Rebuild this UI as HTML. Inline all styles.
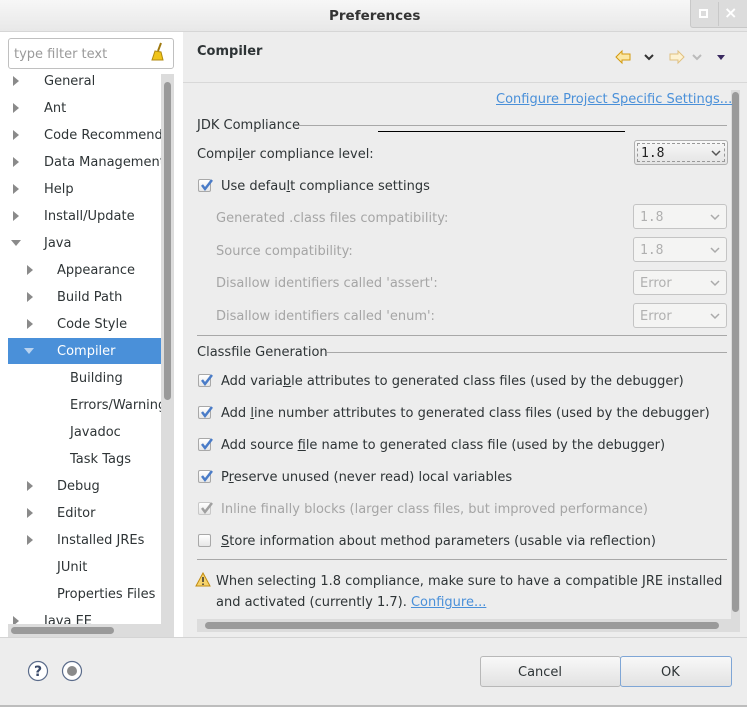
<!DOCTYPE html>
<html><head><meta charset="utf-8"><style>
*{margin:0;padding:0;box-sizing:border-box}
body{width:747px;height:707px;overflow:hidden;background:#ededed;font-family:"DejaVu Sans","Liberation Sans",sans-serif;font-size:13px;color:#2e3436;position:relative;line-height:19px}
.a{position:absolute;white-space:nowrap}
.t{line-height:19px}
.tri{position:absolute;width:0;height:0;border-top:5px solid transparent;border-bottom:5px solid transparent;border-left:6px solid #8a8a8a}
.trd{position:absolute;width:0;height:0;border-left:5px solid transparent;border-right:5px solid transparent;border-top:6px solid #8a8a8a}
.cb{position:absolute;width:13px;height:13px;border:1px solid #a8a8a8;background:linear-gradient(#fff,#e6e6e6);border-radius:2px}
.cb svg{position:absolute;left:0;top:-2px}
.combo{position:absolute;width:94px;height:25px;border:1px solid #c4c4c4;border-radius:3px;background:#f4f4f3;font-family:"DejaVu Sans Mono","Liberation Mono",monospace;color:#b0b0b0;padding:5px 0 0 6px;line-height:15px}
.combo svg{position:absolute;right:6px;top:9px}
.dis{color:#a5a5a5}
u{text-decoration:underline}
</style></head><body>
<div class="a" style="left:0;top:0;width:747px;height:32px;background:linear-gradient(#f7f7f7,#e8e8e8);border-bottom:1px solid #d6d6d6"></div>
<div class="a" style="left:329px;top:7px;font-weight:bold;font-size:13.5px;color:#333">Preferences</div>
<div class="a" style="left:690px;top:0;width:57px;height:28px;background:#dcdcdc;border-left:1px solid #c8c8c8;border-bottom:1px solid #c8c8c8;border-radius:0 0 0 3px"></div>
<div class="a" style="left:718px;top:2px;width:1px;height:24px;background:#c8c8c8"></div>
<div class="a" style="left:699px;top:9px;width:9px;height:9px;border:2px solid #fff"></div>
<div class="a" style="left:724px;top:3px;color:#fff;font-size:16px;font-weight:bold">×</div>

<div class="a" style="left:0;top:32px;width:182px;height:606px;background:#fff"></div>
<div class="a" style="left:8px;top:38px;width:166px;height:31px;border:1px solid #c0c0c0;border-radius:3px;background:#fff"></div>
<div class="a" style="left:14px;top:45px;color:#9a9a9a">type filter text</div>
<svg class="a" style="left:150px;top:42px" width="16" height="20"><path d="M11 1 L8 9" stroke="#a07a10" stroke-width="2"/><path d="M5 9 L11 10 L13 18 L2 18 Z" fill="#f0c419" stroke="#b08a10"/></svg>
<div class="a" style="left:8px;top:74px;width:153px;height:550px;overflow:hidden;background:#fff">
<div class="a" style="left:0;top:264px;width:153px;height:26px;background:#4a90d9"></div>
</div>
<div class="a" style="left:161px;top:74px;width:13px;height:550px;background:#dcdcdc"></div>
<div class="a" style="left:164px;top:82px;width:7px;height:318px;background:#9a9a9a;border-radius:4px"></div>
<div class="a" style="left:8px;top:624px;width:166px;height:13px;background:#dcdcdc"></div>
<div class="a" style="left:11px;top:627px;width:103px;height:7px;background:#9a9a9a;border-radius:4px"></div>
<div class="a" style="left:0;top:74px;width:161px;height:550px;overflow:hidden">
<div class="tri" style="left:13px;top:2px"></div><div class="a t" style="left:44px;top:-2px">General</div>
<div class="tri" style="left:13px;top:29px"></div><div class="a t" style="left:44px;top:25px">Ant</div>
<div class="tri" style="left:13px;top:56px"></div><div class="a t" style="left:44px;top:52px">Code Recommend</div>
<div class="tri" style="left:13px;top:83px"></div><div class="a t" style="left:44px;top:79px">Data Management</div>
<div class="tri" style="left:13px;top:110px"></div><div class="a t" style="left:44px;top:106px">Help</div>
<div class="tri" style="left:13px;top:137px"></div><div class="a t" style="left:44px;top:133px">Install/Update</div>
<div class="trd" style="left:11px;top:166px"></div><div class="a t" style="left:44px;top:160px">Java</div>
<div class="tri" style="left:27px;top:191px"></div><div class="a t" style="left:57px;top:187px">Appearance</div>
<div class="tri" style="left:27px;top:218px"></div><div class="a t" style="left:57px;top:214px">Build Path</div>
<div class="tri" style="left:27px;top:245px"></div><div class="a t" style="left:57px;top:241px">Code Style</div>
<div class="trd" style="left:24px;top:274px;border-top-color:#b9d3f0"></div><div class="a t" style="left:57px;top:268px;color:#fff">Compiler</div>
<div class="a t" style="left:70px;top:295px">Building</div>
<div class="a t" style="left:70px;top:322px">Errors/Warnings</div>
<div class="a t" style="left:70px;top:349px">Javadoc</div>
<div class="a t" style="left:70px;top:376px">Task Tags</div>
<div class="tri" style="left:27px;top:407px"></div><div class="a t" style="left:57px;top:403px">Debug</div>
<div class="tri" style="left:27px;top:434px"></div><div class="a t" style="left:57px;top:430px">Editor</div>
<div class="tri" style="left:27px;top:461px"></div><div class="a t" style="left:57px;top:457px">Installed JREs</div>
<div class="a t" style="left:57px;top:484px">JUnit</div>
<div class="a t" style="left:57px;top:511px">Properties Files</div>
<div class="tri" style="left:13px;top:542px"></div><div class="a t" style="left:44px;top:538px">Java EE</div>
</div>

<div class="a" style="left:197px;top:42px;font-weight:bold">Compiler</div>
<svg class="a" style="left:614px;top:49px" width="115" height="16">
<path d="M2 8 L8 2 L8 5 L16 5 L16 11 L8 11 L8 14 Z" fill="#fbe7a3" stroke="#d49a10"/>
<path d="M31 6 L35 10 L39 6" fill="none" stroke="#333" stroke-width="2"/>
<path d="M70 8 L64 2 L64 5 L56 5 L56 11 L64 11 L64 14 Z" fill="#fdf2d2" stroke="#e0c080"/>
<path d="M79 6 L83 10 L87 6" fill="none" stroke="#bbb" stroke-width="2"/>
<path d="M103 6 L111 6 L107 11 Z" fill="#3a2a60"/>
</svg>
<div class="a" style="left:183px;top:82px;width:564px;height:1px;background:#d8d8d8"></div>

<div class="a" style="left:731px;top:90px;width:9px;height:530px;background:#dcdcdc"></div>
<div class="a" style="left:732px;top:92px;width:7px;height:520px;background:#9a9a9a;border-radius:4px"></div>
<div class="a" style="left:496px;top:90px;color:#4a90d9;text-decoration:underline">Configure Project Specific Settings...</div>
<div class="a" style="left:197px;top:116px">JDK Compliance</div>
<div class="a" style="left:298px;top:125px;width:429px;height:1px;background:#a8a8a8"></div>
<div class="a" style="left:378px;top:131px;width:247px;height:1px;background:#000"></div>
<div class="a" style="left:197px;top:145px">Compi<u>l</u>er compliance level:</div>
<div class="combo" style="left:634px;top:140px;border-color:#b0b0b0;background:linear-gradient(#f8f8f8,#e4e4e4);color:#222"><div class="a" style="left:2px;top:2px;width:88px;height:19px;border:1px dashed #999"></div>1.8<svg width="10" height="7"><path d="M1 1 L5 5 L9 1" fill="none" stroke="#555" stroke-width="1.5"/></svg></div>

<div class="cb" style="left:198px;top:179px"><svg width="15" height="15"><path d="M3 7 L6 11 L13 2" fill="none" stroke="#4a7cc8" stroke-width="2.5"/></svg></div>
<div class="a" style="left:221px;top:177px">Use defau<u>l</u>t compliance settings</div>

<div class="a dis" style="left:216px;top:209px">Generated .class files compatibility:</div>
<div class="a dis" style="left:216px;top:242px">Source compatibility:</div>
<div class="a dis" style="left:216px;top:274px">Disallow identifiers called 'assert':</div>
<div class="a dis" style="left:216px;top:307px">Disallow identifiers called 'enum':</div>
<div class="combo" style="left:633px;top:204px">1.8<svg width="10" height="7"><path d="M1 1 L5 5 L9 1" fill="none" stroke="#aaa" stroke-width="1.5"/></svg></div>
<div class="combo" style="left:633px;top:237px">1.8<svg width="10" height="7"><path d="M1 1 L5 5 L9 1" fill="none" stroke="#aaa" stroke-width="1.5"/></svg></div>
<div class="combo" style="left:633px;top:270px;font-family:'DejaVu Sans',sans-serif">Error<svg width="10" height="7"><path d="M1 1 L5 5 L9 1" fill="none" stroke="#aaa" stroke-width="1.5"/></svg></div>
<div class="combo" style="left:633px;top:303px;font-family:'DejaVu Sans',sans-serif">Error<svg width="10" height="7"><path d="M1 1 L5 5 L9 1" fill="none" stroke="#aaa" stroke-width="1.5"/></svg></div>

<div class="a" style="left:197px;top:335px;width:530px;height:1px;background:#a8a8a8"></div>
<div class="a" style="left:197px;top:343px">Classfile Generation</div>
<div class="a" style="left:327px;top:352px;width:400px;height:1px;background:#a8a8a8"></div>

<div class="cb" style="left:198px;top:374px"><svg width="15" height="15"><path d="M3 7 L6 11 L13 2" fill="none" stroke="#4a7cc8" stroke-width="2.5"/></svg></div>
<div class="a" style="left:221px;top:372px">Add varia<u>b</u>le attributes to generated class files (used by the debugger)</div>
<div class="cb" style="left:198px;top:406px"><svg width="15" height="15"><path d="M3 7 L6 11 L13 2" fill="none" stroke="#4a7cc8" stroke-width="2.5"/></svg></div>
<div class="a" style="left:221px;top:404px">Add <u>l</u>ine number attributes to generated class files (used by the debugger)</div>
<div class="cb" style="left:198px;top:438px"><svg width="15" height="15"><path d="M3 7 L6 11 L13 2" fill="none" stroke="#4a7cc8" stroke-width="2.5"/></svg></div>
<div class="a" style="left:221px;top:436px">Add source <u>f</u>ile name to generated class file (used by the debugger)</div>
<div class="cb" style="left:198px;top:470px"><svg width="15" height="15"><path d="M3 7 L6 11 L13 2" fill="none" stroke="#4a7cc8" stroke-width="2.5"/></svg></div>
<div class="a" style="left:221px;top:468px">P<u>r</u>eserve unused (never read) local variables</div>
<div class="cb" style="left:198px;top:502px;border-color:#c8c8c8"><svg width="15" height="15"><path d="M3 7 L6 11 L13 2" fill="none" stroke="#a0a0a0" stroke-width="2.5"/></svg></div>
<div class="a dis" style="left:221px;top:500px">Inline finally blocks (larger class files, but improved performance)</div>
<div class="cb" style="left:198px;top:534px"></div>
<div class="a" style="left:221px;top:532px"><u>S</u>tore information about method parameters (usable via reflection)</div>

<div class="a" style="left:197px;top:559px;width:530px;height:1px;background:#a8a8a8"></div>
<svg class="a" style="left:195px;top:572px" width="16" height="15"><path d="M8 1 L15 14 L1 14 Z" fill="#f6d36b" stroke="#c08a10"/><path d="M8 5 L8 10 M8 11.5 L8 13" stroke="#333" stroke-width="1.5"/></svg>
<div class="a" style="left:216px;top:572px">When selecting 1.8 compliance, make sure to have a compatible JRE installed</div>
<div class="a" style="left:216px;top:593px">and activated (currently 1.7). <span style="color:#4a90d9;text-decoration:underline">Configure...</span></div>

<div class="a" style="left:197px;top:619px;width:543px;height:13px;background:#dcdcdc"></div>
<div class="a" style="left:205px;top:622px;width:514px;height:7px;background:#9a9a9a;border-radius:4px"></div>
<div class="a" style="left:182px;top:32px;width:1px;height:606px;background:#fff"></div>

<div class="a" style="left:0;top:637px;width:747px;height:1px;background:#d4d4d4"></div>
<svg class="a" style="left:27px;top:660px" width="58" height="22">
<circle cx="11" cy="11" r="9.5" fill="#fff" stroke="#5a6b8a" stroke-width="1.2"/>
<text x="11" y="16" font-family="DejaVu Sans" font-weight="bold" font-size="14" text-anchor="middle" fill="#3a4a6a">?</text>
<circle cx="45" cy="11" r="9.5" fill="#fff" stroke="#5a6b8a" stroke-width="1.2"/>
<circle cx="45" cy="11" r="5" fill="#8a8a8a"/>
</svg>
<div class="a" style="left:480px;top:656px;width:141px;height:31px;border:1px solid #b8b8b8;border-radius:3px;background:linear-gradient(#f8f8f8,#e2e2e2)"></div>
<div class="a" style="left:518px;top:663px">Cancel</div>
<div class="a" style="left:620px;top:656px;width:112px;height:31px;border:1px solid #7fa6d6;border-radius:3px;background:linear-gradient(#f8f8f8,#e2e2e2)"></div>
<div class="a" style="left:661px;top:663px">OK</div>
<div class="a" style="left:0;top:705px;width:747px;height:2px;background:#bdbdbd"></div>
</body></html>
